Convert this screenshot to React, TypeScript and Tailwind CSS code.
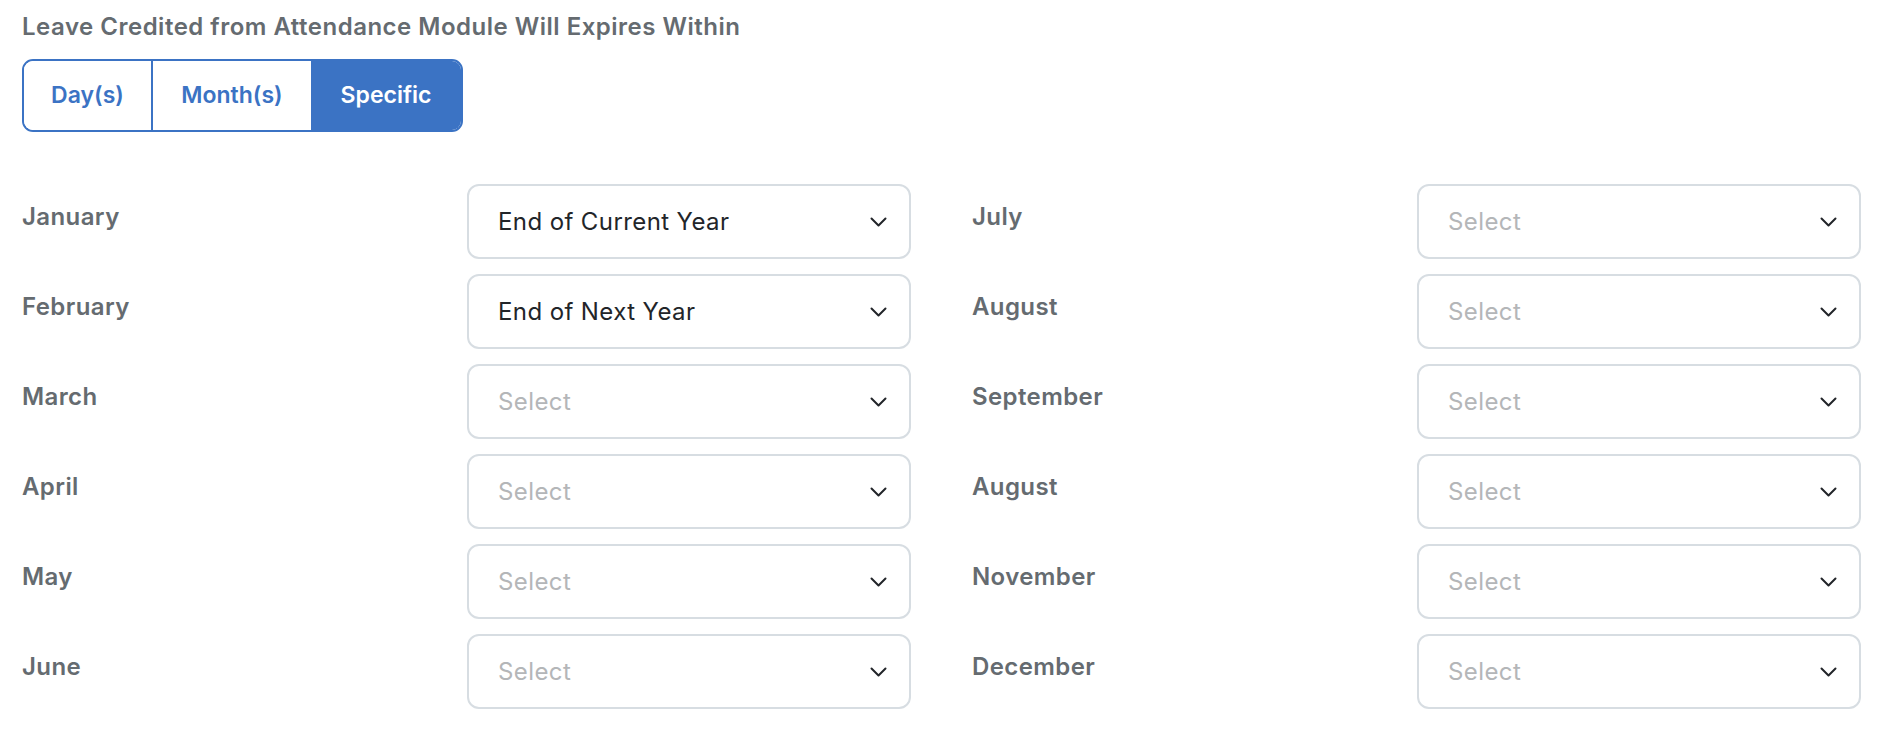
import React, { useState } from 'react';

type Mode = 'days' | 'months' | 'specific';

const LEFT = ['January', 'February', 'March', 'April', 'May', 'June'];
const RIGHT = ['July', 'August', 'September', 'August', 'November', 'December'];

const INITIAL: Record<string, string> = {
  'left-0': 'End of Current Year',
  'left-1': 'End of Next Year',
};

const Chevron: React.FC = () => (
  <svg width="17" height="10" viewBox="0 0 17 10" fill="none" className="shrink-0">
    <path d="M1.5 1.5l7 7 7-7" stroke="#222529" strokeWidth="2" strokeLinecap="round" strokeLinejoin="round" />
  </svg>
);

const MonthRow: React.FC<{ label: string; value?: string }> = ({ label, value }) => (
  <div className="flex items-start justify-between">
    <span className="pt-[18px] text-[24px] leading-[30px] font-semibold tracking-[0.4px] text-[#656b70]">
      {label}
    </span>
    <button
      type="button"
      className="flex h-[75px] w-[444px] items-center justify-between rounded-[12px] border-2 border-[#d7dde2] bg-white pl-[29px] pr-[22px] text-left"
    >
      <span
        className={`pt-[1px] text-[24px] leading-[30px] tracking-[0.4px] ${value ? 'text-[#222529]' : 'text-[#b4b6b8]'}`}
      >
        {value ?? 'Select'}
      </span>
      <Chevron />
    </button>
  </div>
);

export default function App() {
  const [mode, setMode] = useState<Mode>('specific');

  const tab = (m: Mode) =>
    mode === m ? 'bg-[#3b73c4] text-white' : 'bg-white text-[#3b73c4]';

  return (
    <div className="min-h-screen bg-white pl-[22px] pr-[27px] pt-[12px] font-['Inter',sans-serif]">
      <p className="text-[24px] leading-[30px] font-semibold tracking-[0.5px] text-[#656b70]">
        Leave Credited from Attendance Module Will Expires Within
      </p>

      <div className="mt-[17px] inline-flex h-[73px] overflow-hidden rounded-[11px] border-2 border-[#3b73c4]">
        <button
          type="button"
          onClick={() => setMode('days')}
          className={`w-[129px] border-r-2 border-[#3b73c4] text-[23px] font-semibold ${tab('days')}`}
        >
          Day(s)
        </button>
        <button
          type="button"
          onClick={() => setMode('months')}
          className={`w-[158px] text-[23px] font-semibold ${tab('months')}`}
        >
          Month(s)
        </button>
        <button
          type="button"
          onClick={() => setMode('specific')}
          className={`w-[150px] text-[23px] font-semibold ${tab('specific')}`}
        >
          Specific
        </button>
      </div>

      <div className="mt-[52px] grid grid-cols-2 gap-x-[61px] gap-y-[15px]">
        {LEFT.map((l, i) => (
          <React.Fragment key={i}>
            <MonthRow label={l} value={INITIAL[`left-${i}`]} />
            <MonthRow label={RIGHT[i]} value={INITIAL[`right-${i}`]} />
          </React.Fragment>
        ))}
      </div>
    </div>
  );
}
